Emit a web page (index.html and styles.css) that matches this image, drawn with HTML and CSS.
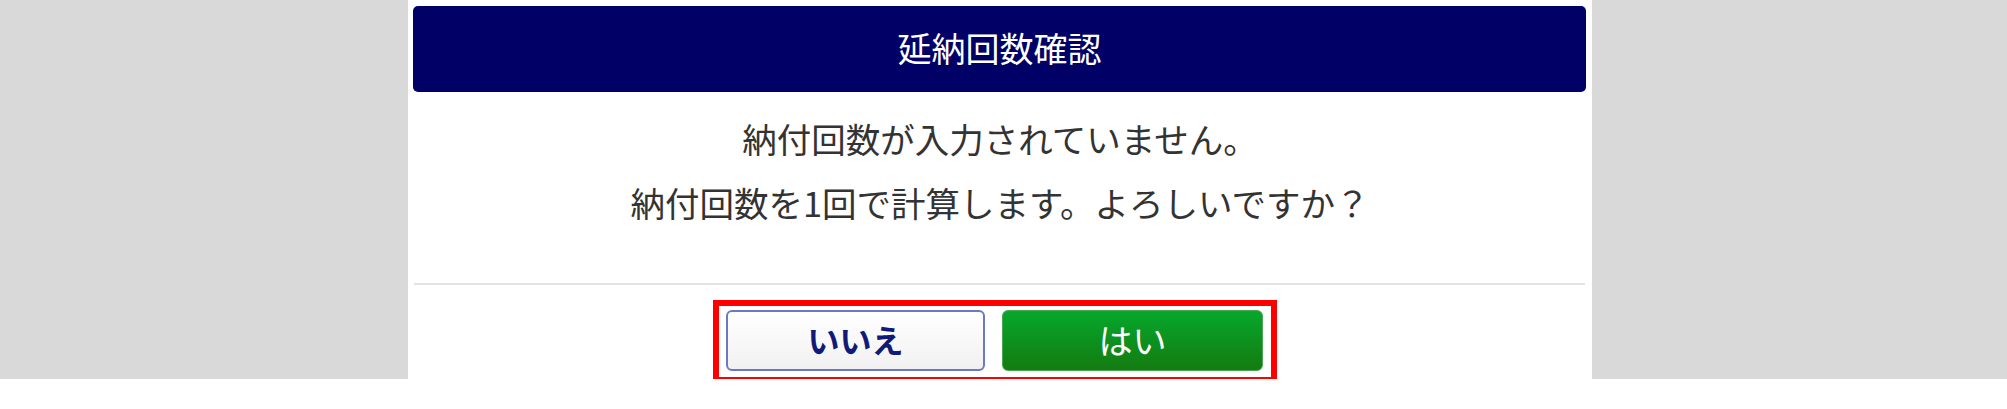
FILE: index.html
```html
<!DOCTYPE html>
<html lang="ja">
<head>
    <meta charset="UTF-8">
    <meta name="viewport" content="width=device-width, initial-scale=1.0">
    <title>延納回数確認</title>
    <link rel="stylesheet" href="styles.css">
</head>
<body>
    <div class="backdrop">
        <div class="dialog">
            <header class="dialog-header">延納回数確認</header>
            <div class="dialog-body">
                <p>納付回数が入力されていません。</p>
                <p>納付回数を1回で計算します。よろしいですか？</p>
            </div>
            <hr class="divider">
            <div class="dialog-footer">
                <div class="button-group">
                    <button class="btn btn-no">いいえ</button>
                    <button class="btn btn-yes">はい</button>
                </div>
            </div>
        </div>
    </div>
</body>
</html>
```

FILE: styles.css
```css
html, body {
    margin: 0;
    padding: 0;
    background: #fff;
    font-family: "Noto Sans CJK JP", "Noto Sans", sans-serif;
    color: #333;
    overflow: hidden;
}
.backdrop {
    height: 379px;
    background: #d9d9d9;
    display: flex;
    justify-content: center;
    padding-right: 7px;
}
.dialog {
    width: 1184px;
    height: 409px;
    flex-shrink: 0;
    background: #fff;
    display: flex;
    flex-direction: column;
}
.dialog-header {
    margin: 6px 6px 0 5px;
    height: 86px;
    background: #000066;
    border-radius: 5px;
    color: #fff;
    font-size: 34px;
    display: flex;
    align-items: center;
    justify-content: center;
    padding-bottom: 3px;
    box-sizing: border-box;
}
.dialog-body {
    padding-top: 14px;
    text-align: center;
    font-size: 34.5px;
    line-height: 64px;
    color: #333;
}
.dialog-body p {
    margin: 0;
}
.divider {
    margin: 49px 7px 0 6px;
    border: none;
    height: 2px;
    background: #e4e4e4;
}
.dialog-footer {
    display: flex;
    justify-content: center;
    padding-top: 15px;
    padding-right: 10px;
}
.button-group {
    display: flex;
    gap: 17px;
    border: 6px solid #ff0000;
    padding: 4px 8px 6px 7px;
}
.btn {
    height: 61px;
    border-radius: 6px;
    font-family: "Noto Sans CJK JP", sans-serif;
    cursor: pointer;
    box-sizing: border-box;
    padding: 0 0 3px;
}
.btn-no {
    width: 259px;
    border: 2px solid #6a79c6;
    background: linear-gradient(#ffffff, #f1f1f1);
    color: #111a78;
    font-size: 32px;
    font-weight: bold;
}
.btn-yes {
    width: 261px;
    border: 1px solid #4aa653;
    background: linear-gradient(#06a82c, #147b10);
    color: #fff;
    font-size: 34px;
    font-weight: normal;
}
```
